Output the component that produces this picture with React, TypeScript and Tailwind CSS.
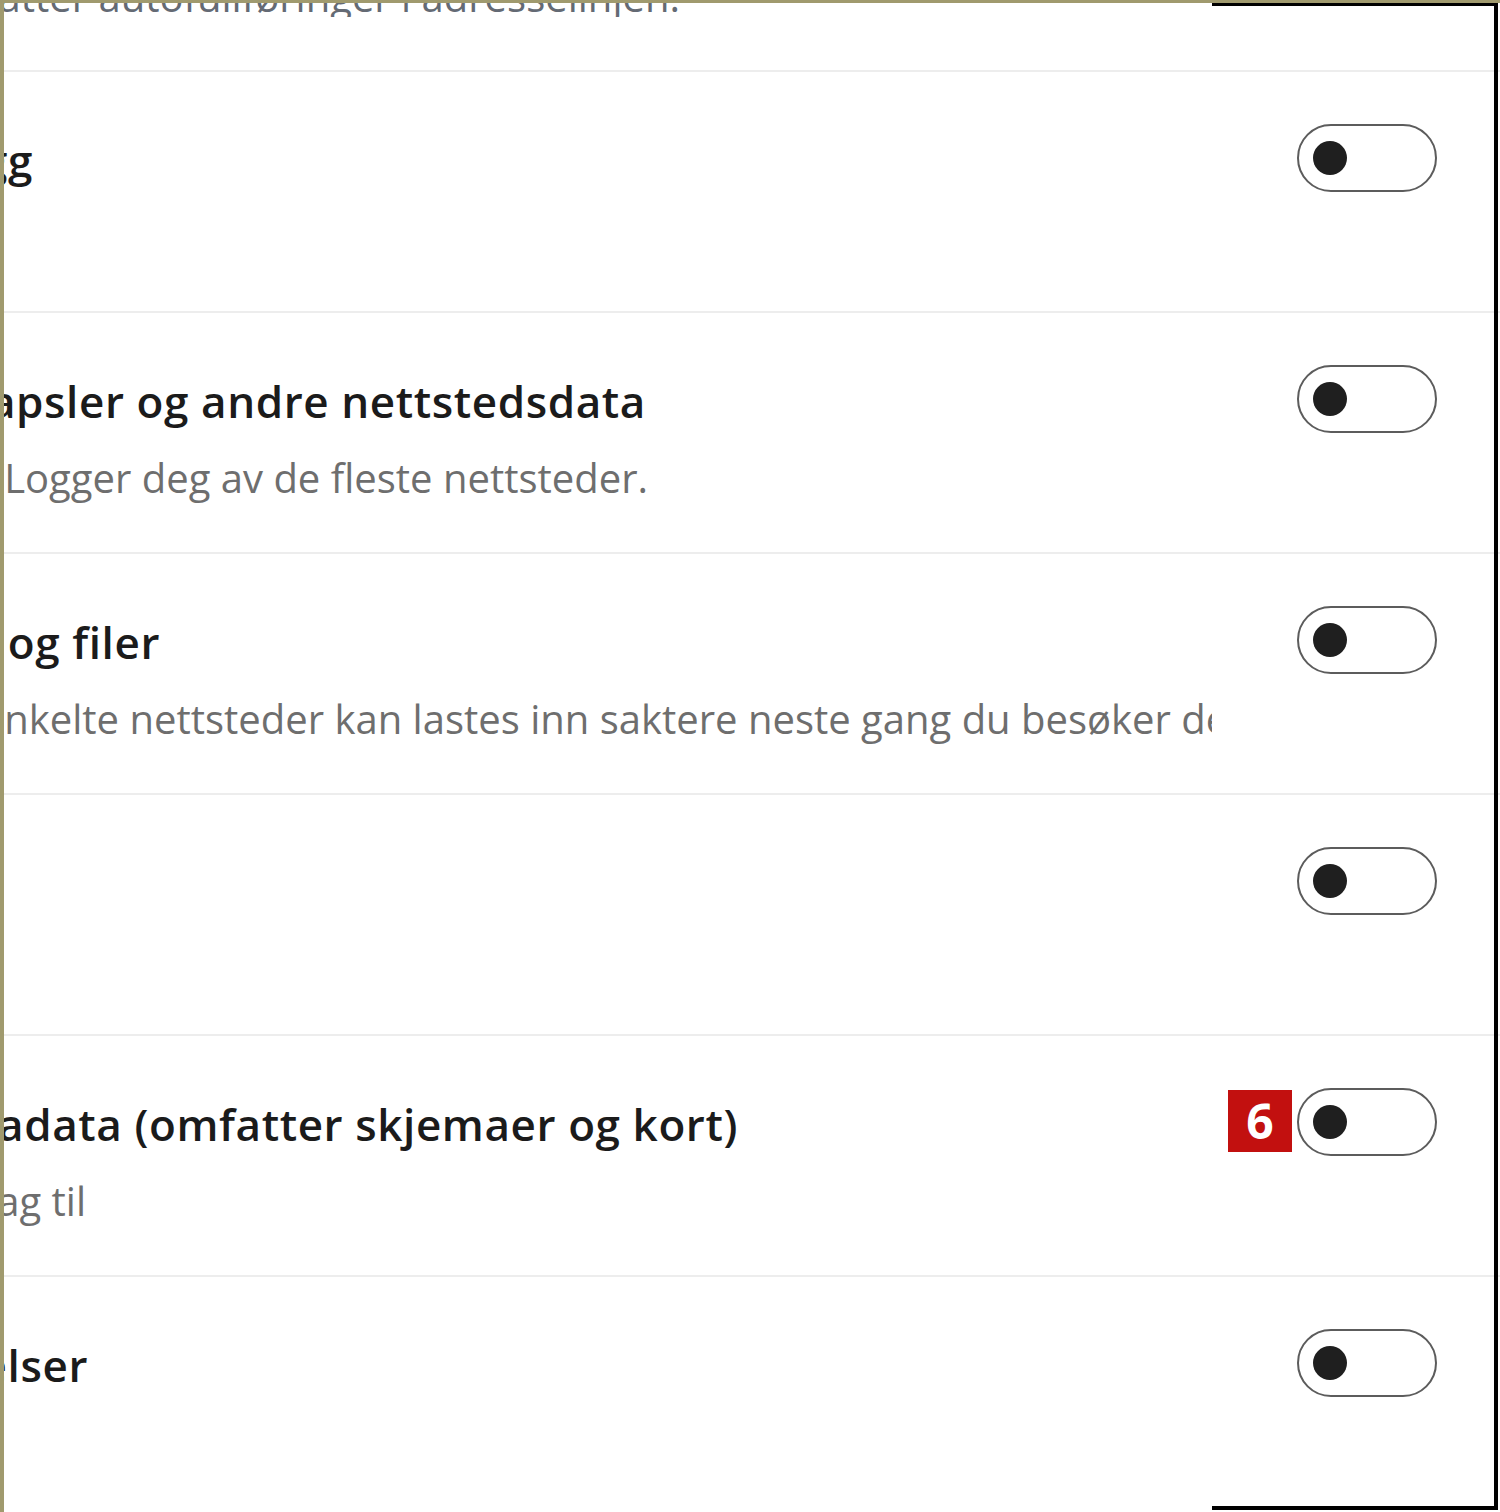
import { Fragment } from "react";

type Row = {
  title: string;
  titleEnd?: number;
  desc?: string;
  descEnd?: number;
  descShift?: number;
  badge?: string;
};

const rows: Row[] = [
  { title: "Nedlastingslogg", titleEnd: 29 },
  {
    title: "Informasjonskapsler og andre nettstedsdata",
    titleEnd: 642,
    desc: "Fra 24 nettsteder. Logger deg av de fleste nettsteder.",
    descEnd: 644,
  },
  {
    title: "Hurtigbufrede bilder og filer",
    titleEnd: 156,
    desc: "Enkelte nettsteder kan lastes inn saktere neste gang du besøker dem.",
    descShift: -22,
  },
  { title: "Passord" },
  {
    title: "Autofyll-skjemadata (omfatter skjemaer og kort)",
    titleEnd: 734,
    desc: "Over 100 forslag til",
    descEnd: 82,
    badge: "6",
  },
  { title: "Nettstedstillatelser", titleEnd: 84 },
];

const font = { fontFamily: '"Open Sans", "Noto Sans", sans-serif' };

function Toggle() {
  return (
    <div className="flex h-[68px] w-[140px] items-center rounded-full border-2 border-[#5c5c5c] bg-white pl-[14px]">
      <div className="h-[34px] w-[34px] rounded-full bg-[#1f1f1f]" />
    </div>
  );
}

// clips a line so its right end sits at `end` px from the pane edge
function ClippedLine({ text, end, className }: { text: string; end?: number; className: string }) {
  if (end === undefined) return <div className={className}>&nbsp;</div>;
  return (
    <div className="flex justify-end overflow-hidden" style={{ width: end }}>
      <span className={`shrink-0 whitespace-nowrap ${className}`}>{text}</span>
    </div>
  );
}

export default function App() {
  return (
    <div
      className="relative h-[1512px] w-[1500px] overflow-hidden border-l-[4px] border-t-[3px] border-[#a09a6e] bg-white"
      style={font}
    >
      <div className="h-[69px] overflow-hidden border-b-2 border-[#ededed]">
        <div className="-mt-[26px] w-[676px] overflow-hidden">
          <div className="flex justify-end">
            <span className="shrink-0 whitespace-nowrap text-[40px] leading-[40px] text-[#646a74]">
              Fjerner logg fra alle enheter. Omfatter autofullføringer i adresselinjen.
            </span>
          </div>
        </div>
      </div>

      {rows.map((r, i) => (
        <Fragment key={i}>
          <div
            className={`flex h-[241px] ${i < rows.length - 1 ? "border-b-2 border-[#ededed]" : ""}`}
          >
            <div className="w-[1208px] shrink-0 overflow-hidden pt-[58px]">
              <ClippedLine
                text={r.title}
                end={r.titleEnd}
                className="text-[44px] font-semibold leading-[60px] tracking-[0.6px] text-[#1b1b1b]"
              />
              {r.desc && (
                <div className="mt-[21px]">
                  {r.descShift !== undefined ? (
                    <div className="overflow-hidden">
                      <span
                        className="block whitespace-nowrap text-[40px] leading-[52px] text-[#6e6e6e]"
                        style={{ marginLeft: r.descShift }}
                      >
                        {r.desc}
                      </span>
                    </div>
                  ) : (
                    <ClippedLine
                      text={r.desc}
                      end={r.descEnd}
                      className="text-[40px] leading-[52px] text-[#6e6e6e]"
                    />
                  )}
                </div>
              )}
            </div>
            <div className="relative flex-1 pl-[85px] pt-[52px]">
              {r.badge && (
                <div className="absolute left-[16px] top-[54px] flex h-[62px] w-[64px] items-center justify-center bg-[#c2100f] text-[48px] font-bold leading-none text-white">
                  {r.badge}
                </div>
              )}
              <Toggle />
            </div>
          </div>
        </Fragment>
      ))}

      <div className="pointer-events-none absolute left-[1208px] top-0 h-[1507px] w-[286px] border-b-[4px] border-r-[4px] border-t-[3px] border-black" />
    </div>
  );
}
